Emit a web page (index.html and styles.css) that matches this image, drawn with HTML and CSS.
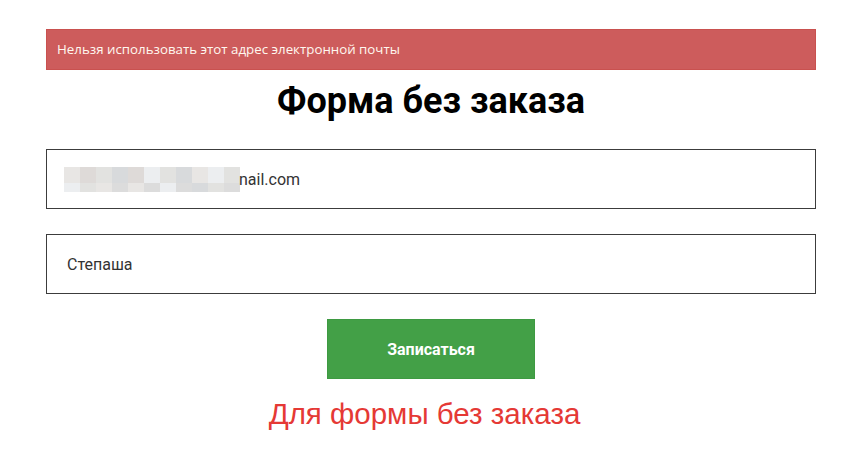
FILE: index.html
```html
<!DOCTYPE html>
<html lang="ru">

<head>
    <meta charset="UTF-8">
    <meta name="viewport" content="width=device-width, initial-scale=1.0">
    <title>Форма без заказа</title>
    <link rel="stylesheet" href="styles.css">
</head>

<body>
    <div class="wrap">
        <div class="alert">Нельзя использовать этот адрес электронной почты</div>
        <h1 class="title">Форма без заказа</h1>
        <form class="form">
            <div class="field">
                <span class="blur">
                    <i class="c1"></i><i class="c2"></i><i class="c3"></i><i class="c4"></i><i class="c2"></i><i class="c5"></i><i class="c3"></i><i class="c4"></i><i class="c1"></i><i class="c5"></i><i class="c3"></i>
                    <i class="c5"></i><i class="c3"></i><i class="c1"></i><i class="c6"></i><i class="c1"></i><i class="c6"></i><i class="c5"></i><i class="c6"></i><i class="c4"></i><i class="c3"></i><i class="c6"></i>
                </span>nail.com
            </div>
            <div class="field">Степаша</div>
            <div class="actions">
                <button type="button" class="btn">Записаться</button>
            </div>
        </form>
        <p class="note">Для формы без заказа</p>
    </div>
</body>

</html>
```

FILE: styles.css
```css
* {
    margin: 0;
    padding: 0;
    box-sizing: border-box;
}

body {
    font-family: Roboto, "Noto Sans", sans-serif;
    color: #222;
    background-color: #fff;
}

.wrap {
    width: 770px;
    margin: 29px auto 0;
}

.alert {
    height: 41px;
    padding: 0 10px;
    background-color: #cd5c5c;
    border: 1px solid #c9514f;
    color: #fff8f0;
    font-family: "Open Sans", "Noto Sans", sans-serif;
    font-size: 13.3px;
    line-height: 39px;
}

.title {
    margin-top: 9px;
    text-align: center;
    font-size: 36px;
    font-weight: bold;
    line-height: 44px;
    color: #000;
}

.form {
    margin-top: 26px;
}

.field {
    display: flex;
    align-items: center;
    height: 60px;
    margin-bottom: 25px;
    padding: 0 20px;
    border: 1px solid #3c3c3c;
    font-size: 16px;
    color: #333;
}

.blur {
    display: grid;
    grid-template-columns: repeat(11, 16px);
    grid-template-rows: 16px 9px;
    margin-left: -3px;
    margin-right: -1px;
    margin-top: 1px;
}

.blur i {
    display: block;
}

.c1 { background-color: #e8e6e4; }
.c2 { background-color: #dedad8; }
.c3 { background-color: #e2e2e0; }
.c4 { background-color: #d8dadc; }
.c5 { background-color: #eceef0; }
.c6 { background-color: #dcdcdc; }

.actions {
    display: flex;
    justify-content: center;
}

.btn {
    width: 208px;
    height: 60px;
    border: 1px solid #3e9a42;
    background-color: #43a047;
    color: #fff;
    font-family: Roboto, sans-serif;
    font-size: 16px;
    font-weight: bold;
    cursor: pointer;
}

.note {
    margin-top: 18px;
    padding-right: 13px;
    text-align: center;
    font-family: "Liberation Sans", Arial, sans-serif;
    font-size: 29.5px;
    color: #e53935;
}
```
